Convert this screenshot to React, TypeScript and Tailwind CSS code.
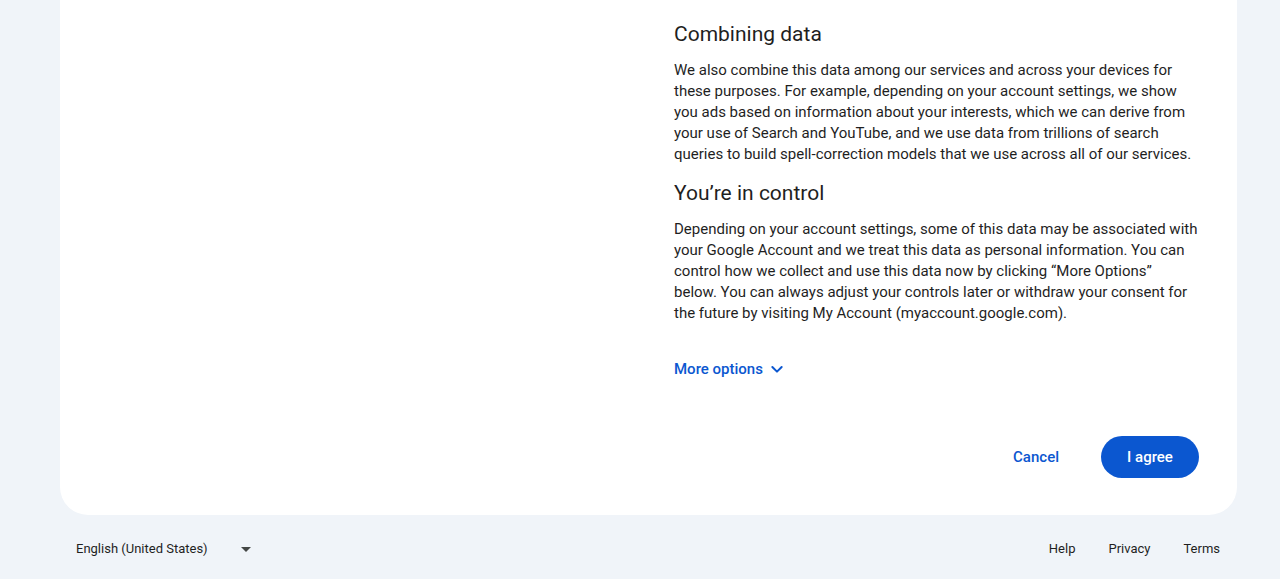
import React from "react";

export default function App() {
  return (
    <div className="min-h-[579px] w-[1280px] bg-[#f0f4f9] font-['Roboto',sans-serif] text-[#1f1f1f] overflow-hidden">
      <div className="mx-[60px] w-[1177px] rounded-b-[28px] bg-white">
        <div className="flex pr-[38px]">
          <div className="flex-1" />
          <div className="w-[525px] pt-[20px] pb-[37px]">
            <h2 className="text-[21px] leading-[28px] font-normal mb-[12px]">Combining data</h2>
            <p className="text-[15px] leading-[21px]">
              We also combine this data among our services and across your devices for these purposes. For example, depending on your account settings, we show you ads based on information about your interests, which we can derive from your use of Search and YouTube, and we use data from trillions of search queries to build spell-correction models that we use across all of our services.
            </p>
            <h2 className="mt-[14px] text-[21px] leading-[28px] font-normal mb-[12px]">You’re in control</h2>
            <p className="text-[15px] leading-[21px]">
              Depending on your account settings, some of this data may be associated with your Google Account and we treat this data as personal information. You can control how we collect and use this data now by clicking “More Options”
              <br />
              below. You can always adjust your controls later or withdraw your consent for the future by visiting My Account (myaccount.google.com).
            </p>
            <button className="mt-[35px] flex items-center gap-[6px] text-[15px] leading-[20px] font-medium text-[#0b57d0]">
              More options
              <svg width="16" height="16" viewBox="0 0 24 24" fill="none" stroke="#0b57d0" strokeWidth="3" strokeLinecap="round" strokeLinejoin="round">
                <path d="M5 9l7 7 7-7" />
              </svg>
            </button>
            <div className="mt-[57px] flex items-center justify-end gap-[18px]">
              <button className="h-[42px] px-[24px] rounded-full text-[15px] font-medium text-[#0b57d0]">Cancel</button>
              <button className="h-[42px] w-[98px] rounded-full bg-[#0b57d0] text-[15px] font-medium text-white">I agree</button>
            </div>
          </div>
        </div>
      </div>
      <div className="flex items-center justify-between h-[68px] pl-[76px] pr-[60px] text-[13px] text-[#1f1f1f]">
        <div className="flex items-center">
          <span>English (United States)</span>
          <svg className="ml-[33px]" width="10" height="5" viewBox="0 0 10 5">
            <path d="M0 0l5 5 5-5z" fill="#444746" />
          </svg>
        </div>
        <div className="flex items-center gap-[33px]">
          <span>Help</span>
          <span>Privacy</span>
          <span>Terms</span>
        </div>
      </div>
    </div>
  );
}
